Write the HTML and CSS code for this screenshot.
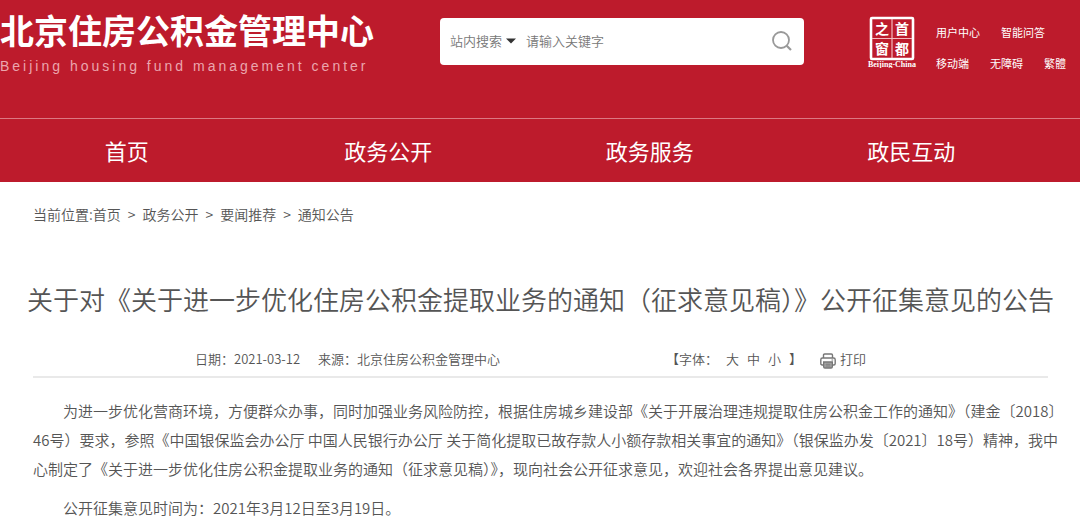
FILE: index.html
```html
<!DOCTYPE html>
<html lang="zh-CN">
<head>
  <meta charset="UTF-8" />
  <meta name="viewport" content="width=device-width, initial-scale=1.0"/>
  <title>北京住房公积金管理中心</title>
  <link rel="stylesheet" href="styles.css">
</head>
<body>
  <header>
    <div class="top">
      <a class="logo" href="#">
        <span class="logo-name">北京住房公积金管理中心</span>
        <span class="logo-en">Beijing housing fund management center</span>
      </a>
      <form class="search">
        <div class="scope">
          <select aria-label="搜索范围">
            <option>站内搜索</option>
          </select>
          <svg class="caret" width="10" height="6" viewBox="0 0 10 6"><path d="M0 0.5h10L5 5.5z" fill="#333"/></svg>
        </div>
        <input type="text" placeholder="请输入关键字" aria-label="关键字">
        <button type="submit" aria-label="搜索">
          <svg width="20" height="20" viewBox="0 0 20 20" fill="none" stroke="#999" stroke-width="1.8"><circle cx="9" cy="9" r="8"/><path d="M14.7 14.7L19 19" stroke-width="2.2"/></svg>
        </button>
      </form>
      <div class="tools">
        <a class="capital" href="#" aria-label="首都之窗">
          <svg width="50" height="52" viewBox="0 0 50 52" fill="#fff">
            <rect x="4" y="2" width="42" height="41" rx="1" fill="none" stroke="#fff" stroke-width="2.6"/>
            <path d="M25 3v39M5 22.5h40" stroke="#f3b9bf" stroke-width="1.2"/>
            <g class="seal">
              <text x="15" y="18">之</text>
              <text x="35" y="18">首</text>
              <text x="15" y="38">窗</text>
              <text x="35" y="38">都</text>
            </g>
            <text class="seal-en" x="25" y="51">Beijing-China</text>
          </svg>
        </a>
        <div class="links">
          <p><a href="#">用户中心</a><a href="#">智能问答</a></p>
          <p><a href="#">移动端</a><a href="#">无障碍</a><a href="#">繁體</a></p>
        </div>
      </div>
    </div>
    <nav>
      <a href="#">首页</a>
      <a href="#">政务公开</a>
      <a href="#">政务服务</a>
      <a href="#">政民互动</a>
    </nav>
  </header>
  <main>
    <div class="crumbs">
      <span>当前位置:<a href="#">首页</a></span>
      <span>&gt;</span>
      <a href="#">政务公开</a>
      <span>&gt;</span>
      <a href="#">要闻推荐</a>
      <span>&gt;</span>
      <a href="#">通知公告</a>
    </div>
    <h1>关于对《关于进一步优化住房公积金提取业务的通知（征求意见稿）》公开征集意见的公告</h1>
    <div class="meta">
      <span>日期：2021-03-12</span>
      <span>来源：北京住房公积金管理中心</span>
      <div class="size">
        <span>【字体：</span>
        <button type="button">大</button>
        <button type="button">中</button>
        <button type="button">小</button>
        <span>】</span>
      </div>
      <button class="print" type="button">
        <svg width="16" height="16" viewBox="0 0 16 16" fill="none" stroke="#777" stroke-width="1.4">
          <path d="M3.5 5V2.2Q3.5 1 4.7 1h6.6q1.2 0 1.2 1.2V5"/>
          <path d="M3.5 12H2.2Q.8 12 .8 10.5V6.7Q.8 5 2.4 5h11.2q1.6 0 1.6 1.7v3.8q0 1.5-1.4 1.5h-1.3"/>
          <path d="M3.7 9h8.6v4.8q0 1.2-1.2 1.2H4.9q-1.2 0-1.2-1.2z" fill="#aaa"/>
          <path d="M5.5 11.2h5M5.5 13h5M11.5 7h1.7" stroke-width="1"/>
        </svg>
        打印
      </button>
    </div>
    <article>
      <p>为进一步优化营商环境，方便群众办事，同时加强业务风险防控，根据住房城乡建设部《关于开展治理违规提取住房公积金工作的通知》（建金〔2018〕<br>46号）要求，参照《中国银保监会办公厅 中国人民银行办公厅 关于简化提取已故存款人小额存款相关事宜的通知》（银保监办发〔2021〕18号）精神，我中<br>心制定了《关于进一步优化住房公积金提取业务的通知（征求意见稿）》，现向社会公开征求意见，欢迎社会各界提出意见建议。</p>
      <p>公开征集意见时间为：2021年3月12日至3月19日。</p>
    </article>
  </main>
</body>
</html>
```
FILE: styles.css
```css
* {
  box-sizing: border-box;
}
body {
  margin: 0;
  font-family: "Noto Sans CJK SC", "Noto Sans", sans-serif;
  font-size: 13px;
  font-weight: 350;
  color: #555;
  background-color: #fff;
  overflow-x: hidden;
}
a {
  color: inherit;
  text-decoration: none;
}
button, input, select {
  font: inherit;
  color: inherit;
  border: none;
  background: none;
  padding: 0;
  margin: 0;
}
button {
  cursor: pointer;
}
svg {
  display: block;
}
header {
  background-color: #bd1b2c;
  color: #fff;
}
.top {
  display: grid;
  grid-template-columns: 440px 1fr 276px;
  align-items: start;
  min-height: 118px;
}
.logo {
  display: flex;
  flex-direction: column;
  padding-top: 10px;
  white-space: nowrap;
}
.logo-name {
  font-size: 34px;
  font-weight: 700;
  line-height: 40px;
}
.logo-en {
  margin-top: 6px;
  font-family: "Liberation Sans", Arial, sans-serif;
  font-size: 14px;
  line-height: 20px;
  letter-spacing: 3px;
  color: #eba6ae;
}
.search {
  display: flex;
  align-items: center;
  height: 47px;
  margin-top: 18px;
  padding: 0 12px 2px 10px;
  background-color: #fff;
  border-radius: 4px;
  color: #777;
}
.scope {
  position: relative;
}
.scope select {
  appearance: none;
  width: 76px;
  outline: none;
}
.caret {
  position: absolute;
  right: 10px;
  top: 50%;
  margin-top: -3px;
  pointer-events: none;
}
.search input {
  flex: 1;
  min-width: 0;
  outline: none;
}
.search input::placeholder {
  color: #777;
}
.tools {
  display: flex;
  gap: 19px;
  padding: 16px 0 0 63px;
}
.seal {
  font-family: "Noto Sans CJK SC", sans-serif;
  font-size: 14px;
  font-weight: 700;
  text-anchor: middle;
}
.seal-en {
  font-family: "Liberation Serif", serif;
  font-size: 8px;
  font-weight: 700;
  text-anchor: middle;
}
.links {
  font-size: 11px;
  font-weight: 400;
  line-height: 16px;
  white-space: nowrap;
}
.links p {
  display: flex;
  gap: 21px;
  margin: 8px 0 15px;
}
nav {
  display: grid;
  grid-template-columns: repeat(4, 1fr);
  margin-left: -4px;
  padding-right: 38px;
  border-top: 1px solid #dc7883;
}
nav a {
  font-size: 22px;
  font-weight: 400;
  line-height: 63px;
  text-align: center;
}
main {
  padding: 0 32px 0 33px;
}
.crumbs {
  display: flex;
  gap: 7px;
  margin-top: 22px;
  font-size: 14px;
  line-height: 20px;
}
h1 {
  display: flex;
  justify-content: center;
  margin: 55px 0 0;
  font-size: 26px;
  font-weight: 350;
  line-height: 40px;
  white-space: nowrap;
}
.meta {
  display: flex;
  align-items: center;
  gap: 18px;
  margin-top: 22px;
  padding: 8px 182px 7px 162px;
  line-height: 20px;
  border-bottom: 2px solid #e9e9e9;
  white-space: nowrap;
}
.size {
  display: flex;
  gap: 8px;
  margin-left: auto;
}
.print {
  display: flex;
  align-items: center;
  gap: 4px;
}
.print svg {
  margin-top: 4px;
}
article {
  padding-top: 18px;
  font-size: 15px;
  line-height: 29px;
  white-space: nowrap;
}
article p {
  margin: 0 0 10px;
  text-indent: 2em;
}
```
